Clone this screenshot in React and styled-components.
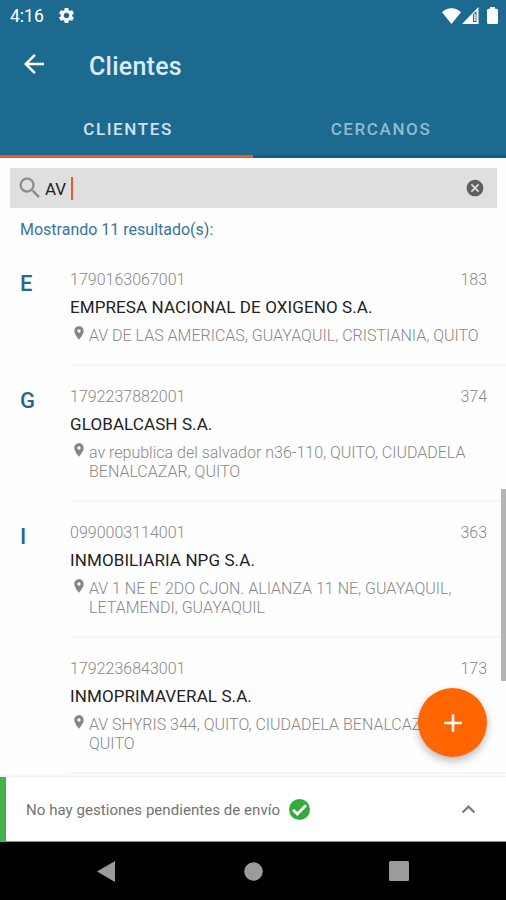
import React from 'react';
import styled, { createGlobalStyle } from 'styled-components';
import { MdSettings, MdArrowBack, MdSearch, MdCancel, MdPlace, MdAdd, MdKeyboardArrowUp } from 'react-icons/md';

const clients = [
    {
        letter: 'E',
        ruc: '1790163067001',
        count: '183',
        name: 'EMPRESA NACIONAL DE OXIGENO S.A.',
        address: ['AV DE LAS AMERICAS, GUAYAQUIL, CRISTIANIA, QUITO'],
    },
    {
        letter: 'G',
        ruc: '1792237882001',
        count: '374',
        name: 'GLOBALCASH S.A.',
        address: ['av republica del salvador n36-110, QUITO, CIUDADELA', 'BENALCAZAR, QUITO'],
    },
    {
        letter: 'I',
        ruc: '0990003114001',
        count: '363',
        name: 'INMOBILIARIA NPG S.A.',
        address: ["AV 1 NE E' 2DO CJON. ALIANZA 11 NE, GUAYAQUIL,", 'LETAMENDI, GUAYAQUIL'],
    },
    {
        letter: '',
        ruc: '1792236843001',
        count: '173',
        name: 'INMOPRIMAVERAL S.A.',
        address: ['AV SHYRIS 344, QUITO, CIUDADELA BENALCAZAR,', 'QUITO'],
    },
];

const App = () => {
    return (
        <StyledApp>
            <GlobalStyle />
            <StyledStatusBar>
                <StyledClock>4:16</StyledClock>
                <MdSettings size={19} />
                <StyledStatusIcons>
                    <svg width="19" height="16" viewBox="0 0 19 16">
                        <path d="M0 4.2C5.3-1 13.700-1 19 4.200L9.500 16z" fill="#fff" />
                    </svg>
                    <svg width="17" height="17" viewBox="0 0 17 17">
                        <path d="M0 17L16.500 0V17z" fill="#fff" />
                        <path d="M11 7.500L14.500 4V15H11z" fill="#1d6a90" />
                        <path d="M12.200 7H13.600V14H12.200z" fill="#fff" />
                    </svg>
                    <svg width="11" height="17" viewBox="0 0 11 17">
                        <path d="M3 0h5v1.800h1.500q1.500 0 1.500 1.500v12.200q0 1.500-1.500 1.500h-8Q0 17 0 15.500V3.300q0-1.500 1.500-1.500H3z" fill="#fff" />
                    </svg>
                </StyledStatusIcons>
            </StyledStatusBar>
            <StyledToolbar>
                <MdArrowBack size={30} />
                <h1>Clientes</h1>
            </StyledToolbar>
            <StyledTabs>
                <StyledTab $active>CLIENTES</StyledTab>
                <StyledTab>CERCANOS</StyledTab>
            </StyledTabs>
            <StyledSearch>
                <MdSearch size={28} color="#8c8c8c" />
                <span>AV</span>
                <StyledCaret />
                <MdCancel size={20} color="#5f5f5f" />
            </StyledSearch>
            <StyledResults>Mostrando 11 resultado(s):</StyledResults>
            <StyledList>
                {clients.map((client) => (
                    <StyledRow key={client.ruc}>
                        <StyledLetter>{client.letter}</StyledLetter>
                        <StyledClient>
                            <StyledRuc>
                                <span>{client.ruc}</span>
                                <span>{client.count}</span>
                            </StyledRuc>
                            <StyledName>{client.name}</StyledName>
                            <StyledAddress>
                                <MdPlace size={16} />
                                <div>
                                    {client.address.map((line) => (
                                        <p key={line}>{line}</p>
                                    ))}
                                </div>
                            </StyledAddress>
                        </StyledClient>
                    </StyledRow>
                ))}
                <StyledScrollThumb />
                <StyledFab>
                    <MdAdd size={30} />
                </StyledFab>
            </StyledList>
            <StyledPending>
                <span>No hay gestiones pendientes de envío</span>
                <svg width="21" height="21" viewBox="0 0 21 21">
                    <circle cx="10.500" cy="10.500" r="10.500" fill="#35a93c" />
                    <path d="M4 10.800L8.300 15L17 6.200" fill="none" stroke="#fff" strokeWidth="2.800" />
                </svg>
                <MdKeyboardArrowUp size={27} color="#7d7d7d" />
            </StyledPending>
            <StyledNavBar>
                <svg width="18" height="21" viewBox="0 0 18 21">
                    <path d="M18 0V21L0 10.500z" fill="#9b9b9b" />
                </svg>
                <svg width="19" height="19" viewBox="0 0 19 19">
                    <circle cx="9.500" cy="9.500" r="9.300" fill="#9b9b9b" />
                </svg>
                <svg width="20" height="20" viewBox="0 0 20 20">
                    <rect width="20" height="20" rx="1.500" fill="#9b9b9b" />
                </svg>
            </StyledNavBar>
        </StyledApp>
    );
}

const GlobalStyle = createGlobalStyle`
    *{
        box-sizing:border-box;
        margin:0;
    }
    body{
        font-family:Roboto, sans-serif;
        background-color:#fff;
    }
    svg{
        display:block;
        flex-shrink:0;
    }
`;
const StyledApp = styled.div`
    width:506px;
    height:900px;
    display:flex;
    flex-direction:column;
    overflow:hidden;
    background-color:#fefefe;
`;
const StyledStatusBar = styled.div`
    height:31px;
    display:flex;
    align-items:center;
    padding:0 8px 0 10px;
    background-color:#1d6a90;
    color:#fff;
`;
const StyledClock = styled.span`
    width:47px;
    font-size:17.5px;
    line-height:31px;
    padding-top:2px;
`;
const StyledStatusIcons = styled.div`
    display:flex;
    align-items:center;
    margin-left:auto;
    >svg:nth-child(2){
        margin-left:1px;
    }
    >svg:nth-child(3){
        margin-left:8px;
    }
`;
const StyledToolbar = styled.header`
    height:70px;
    display:flex;
    align-items:center;
    padding:0 19px 4px;
    background-color:#1d6a90;
    color:#fff;
    >h1{
        margin-left:40px;
        padding-top:4px;
        font-size:25px;
        font-weight:500;
        letter-spacing:0.25px;
        color:#d8ebf7;
    }
`;
const StyledTabs = styled.nav`
    height:57px;
    display:flex;
    background-color:#1d6a90;
`;
const StyledTab = styled.div`
    flex:1;
    text-align:center;
    font-size:17px;
    font-weight:500;
    line-height:56px;
    letter-spacing:1.6px;
    padding-left:3px;
    color:${(props) => (props.$active ? '#cfe3ee' : '#8fbad0')};
    border-bottom:3px solid ${(props) => (props.$active ? '#ee5a26' : '#145f82')};
`;
const StyledSearch = styled.div`
    height:40px;
    margin:10px 9px 0 10px;
    padding:0 12px 0 6px;
    display:flex;
    align-items:center;
    background-color:#dfdfdf;
    font-size:17px;
    color:#222;
    >span{
        margin-left:1px;
        padding-top:1px;
    }
    >svg:last-child{
        margin-left:auto;
    }
`;
const StyledCaret = styled.div`
    width:2px;
    height:23px;
    margin-left:5px;
    background-color:#ee5a26;
`;
const StyledResults = styled.div`
    height:41px;
    padding-left:20px;
    font-size:16px;
    line-height:43px;
    color:#37749a;
`;
const StyledList = styled.main`
    position:relative;
    height:528px;
    overflow:hidden;
`;
const StyledRow = styled.div`
    display:flex;
    padding-left:20px;
`;
const StyledLetter = styled.div`
    width:50px;
    padding-top:22px;
    font-size:22px;
    font-weight:500;
    line-height:26px;
    color:#2a658d;
`;
const StyledClient = styled.div`
    flex:1;
    padding:21px 19px 19px 0;
    border-bottom:2px solid #f6f6f6;
`;
const StyledRuc = styled.div`
    display:flex;
    justify-content:space-between;
    font-size:16px;
    font-weight:300;
    line-height:20px;
    color:#888;
`;
const StyledName = styled.div`
    padding-top:5px;
    font-size:17px;
    line-height:24px;
    letter-spacing:0.1px;
    color:#222;
    white-space:nowrap;
`;
const StyledAddress = styled.div`
    display:flex;
    padding:7px 0 0 1px;
    font-size:16px;
    font-weight:300;
    line-height:19px;
    color:#888;
    white-space:nowrap;
    >svg{
        margin:-1px 2px 0 0;
        color:#858585;
    }
`;
const StyledScrollThumb = styled.div`
    position:absolute;
    right:0;
    top:240px;
    width:5px;
    height:192px;
    background-color:#b4b4b4;
`;
const StyledFab = styled.button`
    position:absolute;
    right:19px;
    top:439px;
    width:69px;
    height:69px;
    display:flex;
    align-items:center;
    justify-content:center;
    padding:0;
    border:none;
    border-radius:50%;
    background-color:#ff6500;
    color:#fff;
    box-shadow:0 4px 8px rgba(0,0,0,0.28);
`;
const StyledPending = styled.footer`
    position:relative;
    height:65px;
    display:flex;
    align-items:center;
    padding:1px 24px 0 20px;
    border-left:6px solid #45b04c;
    border-bottom:1px solid #8a8a8a;
    background-color:#fff;
    box-shadow:0 -1px 2px rgba(0,0,0,0.08);
    font-size:15px;
    letter-spacing:0.05px;
    color:#727272;
    >span{
        padding-top:1px;
    }
    >svg{
        margin-left:9px;
    }
    >svg:last-child{
        margin-left:auto;
    }
`;
const StyledNavBar = styled.div`
    height:58px;
    display:flex;
    align-items:center;
    justify-content:space-between;
    padding:0 97px;
    background-color:#000;
    >svg:nth-child(2){
        margin-left:2px;
    }
`;

export default App;
